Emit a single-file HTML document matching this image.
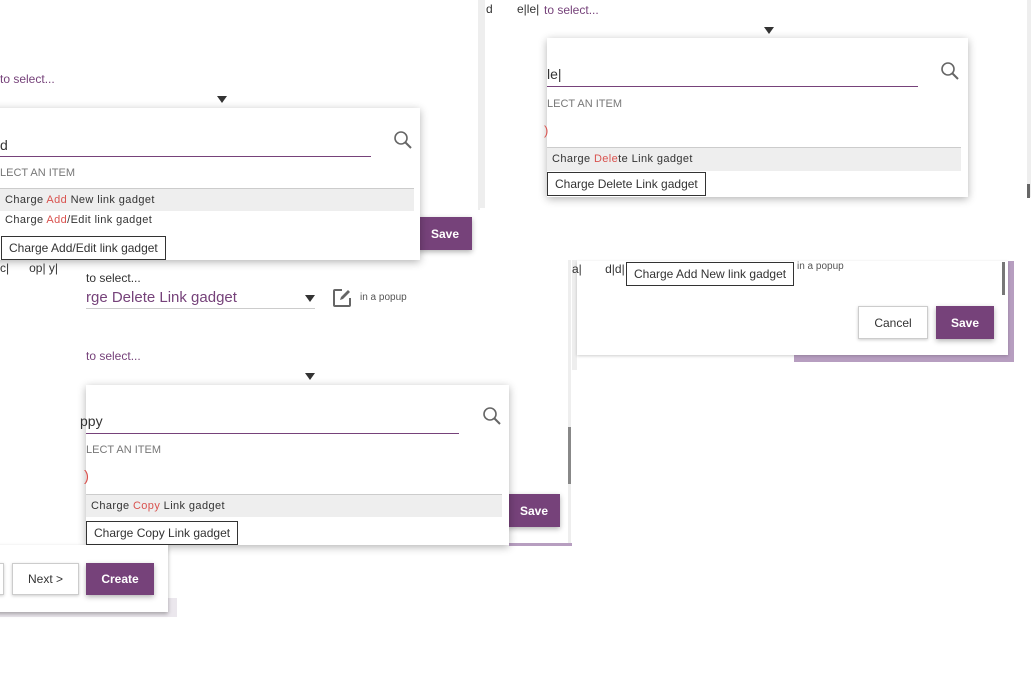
<!DOCTYPE html>
<html><head><meta charset="utf-8"><style>
*{margin:0;padding:0;box-sizing:border-box}
body{width:1034px;height:682px;background:#fff;position:relative;overflow:hidden;font-family:"Liberation Sans",sans-serif;color:#333}
.a{position:absolute;white-space:nowrap}
.pur{color:#76427a}
.tri{position:absolute;width:0;height:0;border-left:5px solid transparent;border-right:5px solid transparent;border-top:7px solid #333}
.pop{position:absolute;background:#fff;box-shadow:0 2px 8px rgba(0,0,0,.3)}
.ul{position:absolute;height:1px;background:#76427a}
.lbl{font-size:11px;color:#777}
.row{position:absolute;background:#eee;border-top:1px solid #ccc;font-size:11px;letter-spacing:.4px;padding-left:5px}
.red{color:#d9534f}
.tip{position:absolute;border:1px solid #333;background:#fff;font-size:12px;padding:4px 7px;color:#333}
.btn{position:absolute;background:#76427a;color:#fff;font-weight:bold;font-size:12px;display:flex;align-items:center;justify-content:center;box-shadow:0 2px 5px rgba(0,0,0,.3)}
.wbtn{position:absolute;background:#fff;border:1px solid #ccc;color:#333;font-size:12px;display:flex;align-items:center;justify-content:center;box-shadow:0 1px 3px rgba(0,0,0,.2)}
</style></head><body>

<!-- top-right collage bg -->
<div class="a" style="left:480px;top:0;width:5px;height:208px;background:#eee"></div>
<div class="a" style="left:1027px;top:0;width:4px;height:197px;background:#eee"></div>
<div class="a" style="left:1027px;top:184px;width:3px;height:14px;background:#666"></div>
<div class="a" style="left:486px;top:2px;font-size:12px">d</div>
<div class="a" style="left:517px;top:2px;font-size:12px">e|le|</div>
<div class="a pur" style="left:544px;top:3px;font-size:12px">to select...</div>
<div class="tri" style="left:764px;top:27px"></div>
<div class="pop" style="left:547px;top:38px;width:421px;height:159px"></div>
<div class="a" style="left:547px;top:66px;font-size:14px">le|</div>
<div class="ul" style="left:547px;top:86px;width:371px"></div>
<svg class="a" style="left:940px;top:61px" width="20" height="20" viewBox="0 0 20 20"><circle cx="8" cy="8" r="6" fill="none" stroke="#666" stroke-width="1.6"/><path d="M12.5 12.5L18 18" stroke="#666" stroke-width="2"/></svg>
<div class="a lbl" style="left:547px;top:98px">LECT AN ITEM</div>
<div class="a red" style="left:544px;top:123px;font-size:13px">)</div>
<div class="row" style="left:547px;top:147px;width:414px;height:24px;line-height:22px">Charge <span class="red">Dele</span>te Link gadget</div>
<div class="tip" style="left:547px;top:172px">Charge Delete Link gadget</div>

<!-- top-left collage -->
<div class="a pur" style="left:0;top:72px;font-size:12px">to select...</div>
<div class="tri" style="left:217px;top:96px"></div>
<div class="a" style="left:478px;top:0;width:2px;height:210px;background:#eee"></div>
<div class="btn" style="left:418px;top:217px;width:54px;height:33px">Save</div>
<div class="pop" style="left:-10px;top:108px;width:430px;height:152px"></div>
<div class="a" style="left:0;top:137px;font-size:14px">d</div>
<div class="ul" style="left:0;top:156px;width:371px"></div>
<svg class="a" style="left:393px;top:130px" width="20" height="20" viewBox="0 0 20 20"><circle cx="8" cy="8" r="6" fill="none" stroke="#666" stroke-width="1.6"/><path d="M12.5 12.5L18 18" stroke="#666" stroke-width="2"/></svg>
<div class="a lbl" style="left:0;top:167px">LECT AN ITEM</div>
<div class="row" style="left:0;top:188px;width:414px;height:23px;line-height:22px">Charge <span class="red">Add</span> New link gadget</div>
<div class="a" style="left:5px;top:214px;font-size:11px;letter-spacing:.4px">Charge <span class="red">Add</span>/Edit link gadget</div>
<div class="tip" style="left:1px;top:236px">Charge Add/Edit link gadget</div>

<!-- middle-left -->
<div class="a" style="left:0;top:261px;font-size:12px">c| &nbsp; &nbsp; &nbsp;op| y|</div>
<div class="a" style="left:86px;top:271px;font-size:12px">to select...</div>
<div class="a pur" style="left:86px;top:289px;font-size:15px">rge Delete Link gadget</div>
<div class="a" style="left:86px;top:308px;width:229px;height:1px;background:#ccc"></div>
<div class="tri" style="left:305px;top:295px"></div>
<svg class="a" style="left:332px;top:288px" width="20" height="20" viewBox="0 0 20 20"><path d="M10 2H3a1 1 0 0 0-1 1v14a1 1 0 0 0 1 1h14a1 1 0 0 0 1-1v-7" fill="none" stroke="#666" stroke-width="2"/><path d="M8 12l1-3 7-7 2 2-7 7z" fill="#666"/></svg>
<div class="a" style="left:360px;top:292px;font-size:10px;color:#555">in a popup</div>

<div class="a" style="left:568px;top:260px;width:3px;height:285px;background:#eee"></div>
<div class="a" style="left:568px;top:427px;width:3px;height:57px;background:#888"></div>
<div class="a pur" style="left:86px;top:349px;font-size:12px">to select...</div>
<div class="tri" style="left:305px;top:373px"></div>
<div class="btn" style="left:508px;top:494px;width:52px;height:33px">Save</div>
<div class="a" style="left:509px;top:543px;width:63px;height:3px;background:#b79ec0"></div>
<div class="pop" style="left:86px;top:385px;width:423px;height:160px"></div>
<div class="a" style="left:80px;top:413px;font-size:14px">ppy</div>
<div class="ul" style="left:86px;top:433px;width:373px"></div>
<svg class="a" style="left:482px;top:406px" width="20" height="20" viewBox="0 0 20 20"><circle cx="8" cy="8" r="6" fill="none" stroke="#666" stroke-width="1.6"/><path d="M12.5 12.5L18 18" stroke="#666" stroke-width="2"/></svg>
<div class="a lbl" style="left:86px;top:444px">LECT AN ITEM</div>
<div class="a red" style="left:84px;top:468px;font-size:15px">)</div>
<div class="row" style="left:86px;top:494px;width:416px;height:23px;line-height:22px">Charge <span class="red">Copy</span> Link gadget</div>
<div class="tip" style="left:86px;top:521px">Charge Copy Link gadget</div>

<!-- bottom-left -->
<div class="a" style="left:0;top:598px;width:177px;height:19px;background:#ebe7ed"></div>
<div class="pop" style="left:-10px;top:545px;width:178px;height:67px;box-shadow:0 2px 4px rgba(0,0,0,.3)"></div>
<div class="wbtn" style="left:-10px;top:563px;width:14px;height:32px"></div>
<div class="wbtn" style="left:12px;top:563px;width:67px;height:32px">Next &gt;</div>
<div class="btn" style="left:86px;top:563px;width:68px;height:32px">Create</div>

<!-- bottom-right -->
<div class="a" style="left:572px;top:260px;width:5px;height:110px;background:#eee"></div>
<div class="a" style="left:794px;top:261px;width:220px;height:101px;background:#b79ec0"></div>
<div class="a" style="left:577px;top:261px;width:431px;height:94px;background:#fff;box-shadow:0 1px 3px rgba(0,0,0,.2)"></div>
<div class="a" style="left:1002px;top:262px;width:3px;height:33px;background:#777"></div>
<div class="a" style="left:572px;top:262px;font-size:12px">a| &nbsp; &nbsp; &nbsp; d|d|</div>
<div class="tip" style="left:626px;top:262px">Charge Add New link gadget</div>
<div class="a" style="left:797px;top:261px;font-size:10px;color:#555">in a popup</div>
<div class="wbtn" style="left:858px;top:306px;width:70px;height:33px">Cancel</div>
<div class="btn" style="left:936px;top:306px;width:58px;height:33px">Save</div>
</body></html>
